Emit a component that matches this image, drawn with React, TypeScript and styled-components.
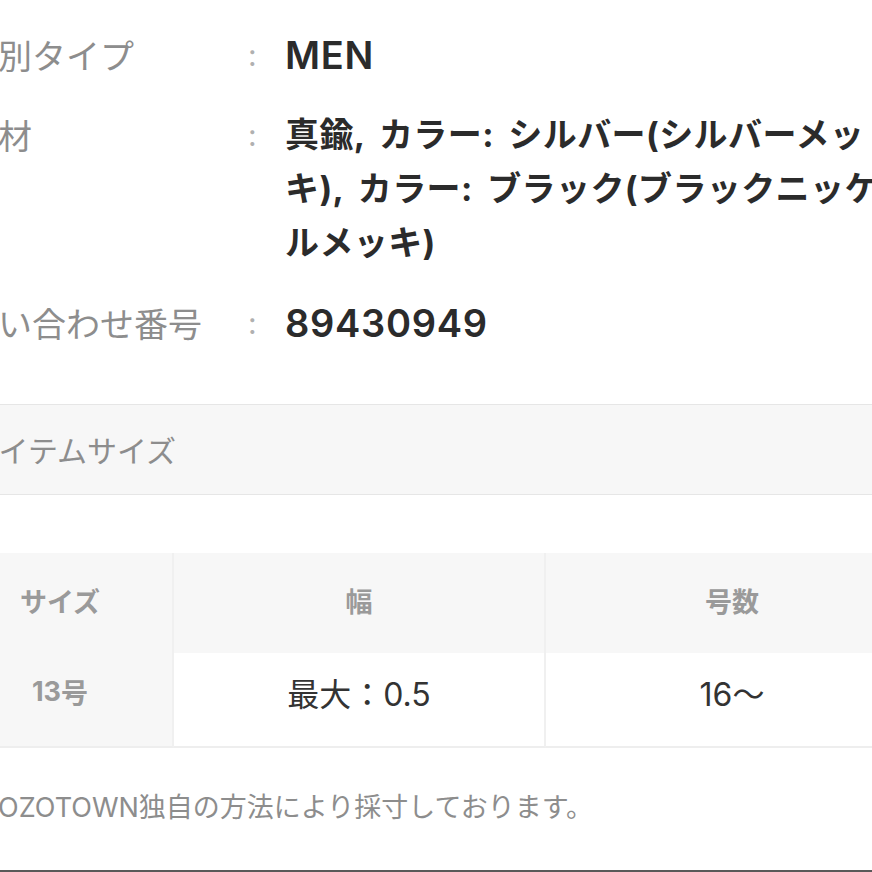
import React from "react";
import styled, { createGlobalStyle } from "styled-components";

const GlobalStyle = createGlobalStyle`
  html, body {
    margin: 0;
    padding: 0;
    background: #ffffff;
  }
  body {
    font-family: Inter, "Noto Sans CJK JP", sans-serif;
    -webkit-font-smoothing: antialiased;
  }
`;

const Page = styled.div`
  width: 872px;
  height: 872px;
  overflow: hidden;
  display: flex;
  flex-direction: column;
  background: #ffffff;
`;

const Content = styled.div`
  margin-left: -52px;
  width: 970px;
  display: flex;
  flex-direction: column;
  flex: 1;
`;

const DetailList = styled.dl`
  margin: 0;
  padding: 28px 0 0 16px;
  display: flex;
  flex-direction: column;
  gap: 26px;
`;

const Row = styled.div`
  display: flex;
  align-items: flex-start;
  line-height: 54px;
`;

const Label = styled.dt`
  width: 284px;
  flex: none;
  font-family: "Noto Sans CJK JP", sans-serif;
  font-size: 34px;
  font-weight: 400;
  color: #8d8d8d;
  white-space: nowrap;
`;

const Colon = styled.span`
  width: 37px;
  flex: none;
  font-family: Inter, sans-serif;
  font-size: 30px;
  color: #b0b0b0;
`;

const Value = styled.dd<{ $latin?: boolean }>`
  margin: 0;
  flex: 1;
  font-family: Inter, "Noto Sans CJK JP", sans-serif;
  font-size: ${(p) => (p.$latin ? "38px" : "34px")};
  font-weight: ${(p) => (p.$latin ? 600 : 700)};
  letter-spacing: ${(p) => (p.$latin ? "0.7px" : "0.4px")};
  word-spacing: ${(p) => (p.$latin ? "0" : "6px")};
  color: #2b2b2b;
  white-space: nowrap;
  overflow: hidden;
`;

const SectionBand = styled.h2`
  margin: 54px 0 0;
  padding: 0 0 0 22px;
  height: 89px;
  line-height: 89px;
  background: #f7f7f7;
  border-top: 1px solid #e6e6e6;
  border-bottom: 1px solid #e6e6e6;
  font-family: "Noto Sans CJK JP", sans-serif;
  font-size: 30px;
  font-weight: 400;
  color: #8d8d8d;
  white-space: nowrap;
`;

const SizeTable = styled.div`
  margin-top: 58px;
  display: grid;
  grid-template-columns: 226px 372px 372px;
  grid-template-rows: 100px 95px;
`;

const Cell = styled.div<{ $head?: boolean; $stub?: boolean; $last?: boolean }>`
  display: flex;
  align-items: center;
  justify-content: center;
  box-sizing: border-box;
  padding-bottom: ${(p) => (p.$head ? "6px" : "16px")};
  background: ${(p) => (p.$head || p.$stub ? "#f7f7f7" : "#ffffff")};
  border-right: ${(p) => (p.$last ? "none" : "2px solid #f0f0f0")};
  border-bottom: ${(p) => (p.$head ? "none" : "2px solid #eeeeee")};
  font-family: ${(p) =>
    p.$head || p.$stub ? '"Noto Sans CJK JP", sans-serif' : 'Inter, "Noto Sans CJK JP", sans-serif'};
  font-size: ${(p) => (p.$head || p.$stub ? "27px" : "32px")};
  font-weight: ${(p) => (p.$head || p.$stub ? 700 : 400)};
  color: ${(p) => (p.$head || p.$stub ? "#9a9a9a" : "#333333")};
  white-space: nowrap;
`;

const StubNumber = styled.span`
  font-family: Inter, "Noto Sans CJK JP", sans-serif;
  font-weight: 700;
`;

const Note = styled.p`
  margin: 40px 0 0;
  padding-left: 34px;
  line-height: 40px;
  font-family: Inter, "Noto Sans CJK JP", sans-serif;
  font-size: 27px;
  font-weight: 400;
  color: #8d8d8d;
  white-space: nowrap;
`;

const FooterEdge = styled.div`
  margin-top: auto;
  height: 2px;
  background: #595959;
`;

export default function App() {
  return (
    <>
      <GlobalStyle />
      <Page>
        <Content>
          <DetailList>
            <Row>
              <Label>性別タイプ</Label>
              <Colon>:</Colon>
              <Value $latin>MEN</Value>
            </Row>
            <Row>
              <Label>素材</Label>
              <Colon>:</Colon>
              <Value>
                真鍮, カラー: シルバー(シルバーメッ
                <br />
                キ), カラー: ブラック(ブラックニッケ
                <br />
                ルメッキ)
              </Value>
            </Row>
            <Row>
              <Label>問い合わせ番号</Label>
              <Colon>:</Colon>
              <Value $latin>89430949</Value>
            </Row>
          </DetailList>

          <SectionBand>アイテムサイズ</SectionBand>

          <SizeTable>
            <Cell $head>サイズ</Cell>
            <Cell $head>幅</Cell>
            <Cell $head $last>号数</Cell>
            <Cell $stub>
              <StubNumber>13</StubNumber>号
            </Cell>
            <Cell>最大：0.5</Cell>
            <Cell $last>16〜</Cell>
          </SizeTable>

          <Note>ZOZOTOWN独自の方法により採寸しております。</Note>
          <FooterEdge />
        </Content>
      </Page>
    </>
  );
}
